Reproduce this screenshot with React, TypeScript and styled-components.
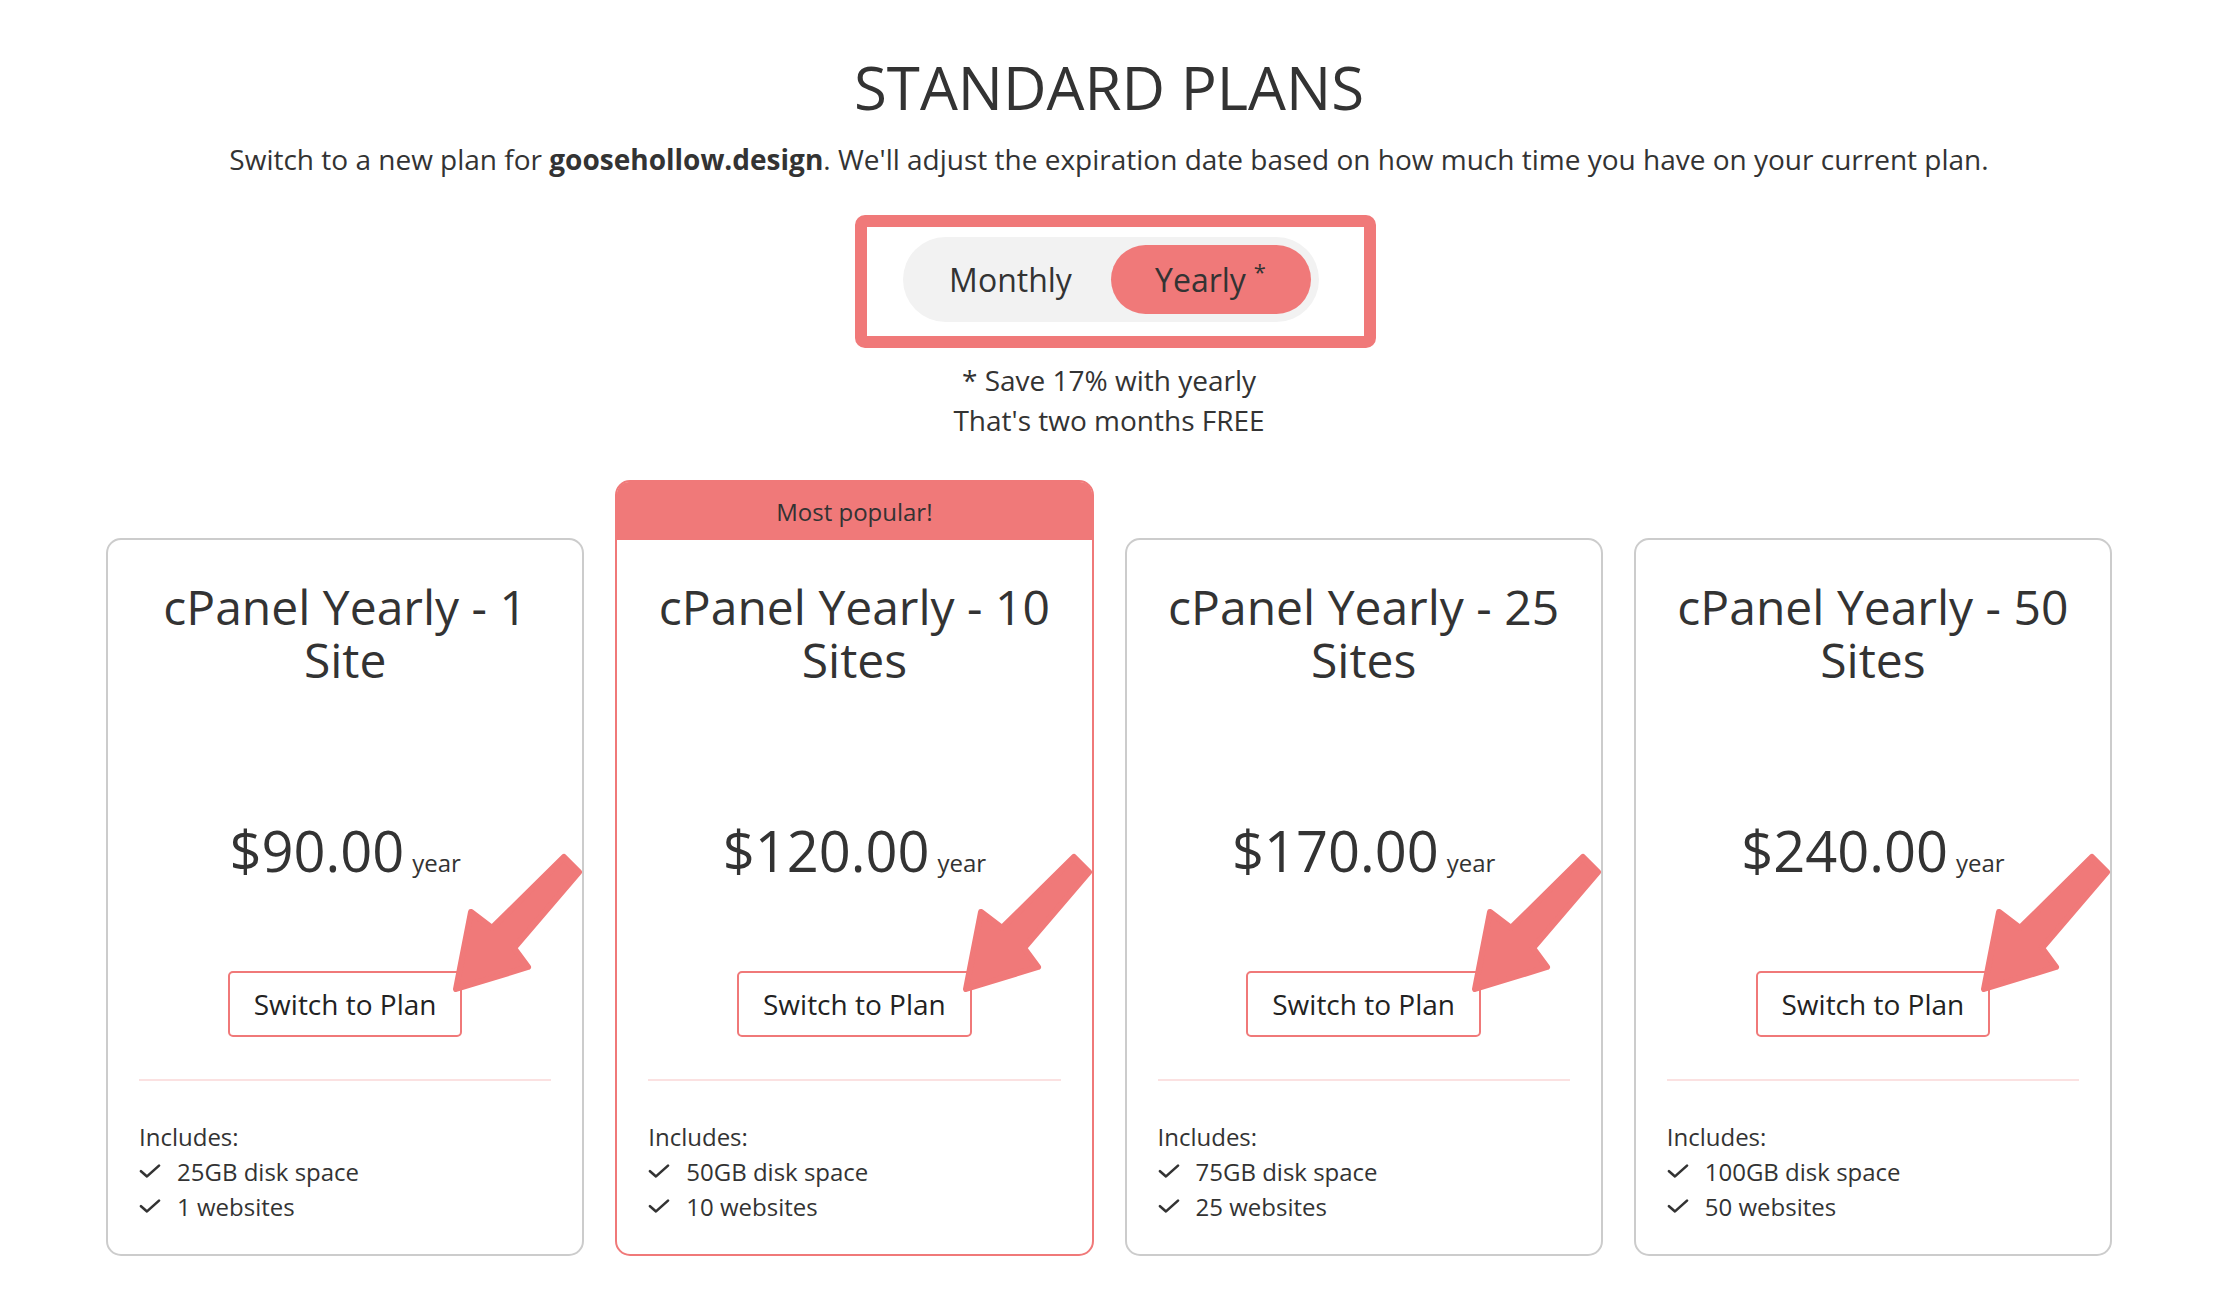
import React, { useState } from 'react';
import styled, { createGlobalStyle } from 'styled-components';

const RED = '#f07979';
const TEXT = '#333333';

type Plan = {
  id: number;
  name: string;
  price: string;
  disk: string;
  sites: number;
  popular?: boolean;
};

const plans: Plan[] = [
  { id: 1, name: 'cPanel Yearly - 1 Site', price: '$90.00', disk: '25GB', sites: 1 },
  { id: 2, name: 'cPanel Yearly - 10 Sites', price: '$120.00', disk: '50GB', sites: 10, popular: true },
  { id: 3, name: 'cPanel Yearly - 25 Sites', price: '$170.00', disk: '75GB', sites: 25 },
  { id: 4, name: 'cPanel Yearly - 50 Sites', price: '$240.00', disk: '100GB', sites: 50 },
];

function CheckIcon() {
  return (
    <svg width="22" height="14" viewBox="0 0 22 14" fill="none">
      <path
        d="M2 7.2 L8 12.4 L20 1.6"
        stroke={TEXT}
        strokeWidth="2.6"
        strokeLinecap="round"
        strokeLinejoin="round"
      />
    </svg>
  );
}

// hand-drawn style annotation arrow pointing at the button
function Arrow() {
  return (
    <ArrowSvg width="134" height="142" viewBox="0 0 134 142">
      <path
        d="M5 137 L20 60 L41 76 L113 5 L128 20 L63 96 L77 115 Z"
        fill={RED}
        stroke={RED}
        strokeWidth="6"
        strokeLinejoin="round"
      />
    </ArrowSvg>
  );
}

function PlanCard({ plan }: { plan: Plan }) {
  return (
    <Card $popular={plan.popular}>
      {plan.popular && <Ribbon>Most popular!</Ribbon>}
      <CardBody>
        <PlanName>{plan.name}</PlanName>
        <Price>
          {plan.price}
          <Period>year</Period>
        </Price>
        <ButtonWrap>
          <SwitchButton>Switch to Plan</SwitchButton>
          <Arrow />
        </ButtonWrap>
        <Divider />
        <Features>
          <li>Includes:</li>
          <Feature>
            <CheckIcon />
            <span>{plan.disk} disk space</span>
          </Feature>
          <Feature>
            <CheckIcon />
            <span>{plan.sites} websites</span>
          </Feature>
        </Features>
      </CardBody>
    </Card>
  );
}

function App() {
  const [period, setPeriod] = useState<'monthly' | 'yearly'>('yearly');

  return (
    <Page>
      <GlobalStyle />
      <Title>STANDARD PLANS</Title>
      <Subtitle>
        Switch to a new plan for <b>goosehollow.design</b>. We'll adjust the
        expiration date based on how much time you have on your current plan.
      </Subtitle>
      <Highlight>
        <Toggle>
          <ToggleItem
            $active={period === 'monthly'}
            onClick={() => setPeriod('monthly')}
          >
            Monthly
          </ToggleItem>
          <ToggleItem
            $active={period === 'yearly'}
            onClick={() => setPeriod('yearly')}
          >
            Yearly<sup>*</sup>
          </ToggleItem>
        </Toggle>
      </Highlight>
      <SaveNote>
        * Save 17% with yearly
        <br />
        That's two months FREE
      </SaveNote>
      <CardGrid>
        {plans.map((plan) => (
          <PlanCard key={plan.id} plan={plan} />
        ))}
      </CardGrid>
    </Page>
  );
}

export default App;

const GlobalStyle = createGlobalStyle`
  * {
    box-sizing: border-box;
  }

  body {
    margin: 0;
    background: #ffffff;
    color: ${TEXT};
    font-family: "Open Sans", "Noto Sans", sans-serif;
  }
`;

const Page = styled.div`
  display: flex;
  flex-direction: column;
  align-items: center;
  padding: 51px 106px 60px;
`;

const Title = styled.h1`
  margin: 0;
  font-size: 60px;
  line-height: 72px;
  font-weight: 400;
  color: ${TEXT};
`;

const Subtitle = styled.p`
  margin: 16px 0 0;
  font-size: 28px;
  line-height: 40px;

  b {
    font-weight: 700;
  }
`;

const Highlight = styled.div`
  margin: 36px 0 0 12px;
  padding: 10px 45px 14px 36px;
  border: 12px solid ${RED};
  border-radius: 10px;
`;

const Toggle = styled.div`
  display: flex;
  padding: 8px;
  background: #f2f2f2;
  border-radius: 999px;
`;

const ToggleItem = styled.button<{ $active?: boolean }>`
  width: 200px;
  height: 69px;
  border: none;
  border-radius: 999px;
  background: ${({ $active }) => ($active ? RED : 'transparent')};
  color: ${TEXT};
  font-family: inherit;
  font-size: 32px;
  cursor: pointer;

  sup {
    font-size: 22px;
    margin-left: 8px;
    line-height: 0;
  }
`;

const SaveNote = styled.p`
  margin: 12px 0 0;
  font-size: 28px;
  line-height: 40px;
  text-align: center;
`;

const CardGrid = styled.div`
  width: 100%;
  margin-top: 40px;
  display: grid;
  grid-template-columns: repeat(4, 1fr);
  column-gap: 31px;
  align-items: end;
`;

const Card = styled.div<{ $popular?: boolean }>`
  border: 2px solid ${({ $popular }) => ($popular ? RED : '#cccccc')};
  border-radius: 15px;
  background: #ffffff;
`;

const Ribbon = styled.div`
  height: 58px;
  background: ${RED};
  border-radius: 12px 12px 0 0;
  display: flex;
  align-items: center;
  justify-content: center;
  font-size: 24px;
  color: ${TEXT};
`;

const CardBody = styled.div`
  display: flex;
  flex-direction: column;
  align-items: center;
  padding: 41px 31px 30px;
`;

const PlanName = styled.h2`
  margin: 0;
  font-size: 48px;
  line-height: 1.1;
  font-weight: 400;
  text-align: center;
`;

const Price = styled.div`
  margin-top: 130px;
  font-size: 56px;
  line-height: 1.2;
`;

const Period = styled.span`
  margin-left: 8px;
  font-size: 24px;
`;

const ButtonWrap = styled.div`
  position: relative;
  margin-top: 87px;
`;

const SwitchButton = styled.button`
  padding: 11px 24px;
  border: 2px solid ${RED};
  border-radius: 5px;
  background: #ffffff;
  color: #222222;
  font-family: inherit;
  font-size: 28px;
  line-height: 40px;
  cursor: pointer;
`;

const ArrowSvg = styled.svg`
  position: absolute;
  left: calc(100% - 11px);
  top: -119px;
  pointer-events: none;
`;

const Divider = styled.hr`
  align-self: stretch;
  margin: 42px 0 0;
  border: none;
  border-top: 2px solid #fbe1e1;
`;

const Features = styled.ul`
  align-self: stretch;
  margin: 38px 0 0;
  padding: 0;
  list-style: none;
  font-size: 24px;
  line-height: 35px;
`;

const Feature = styled.li`
  display: flex;
  align-items: center;
  gap: 16px;
`;
